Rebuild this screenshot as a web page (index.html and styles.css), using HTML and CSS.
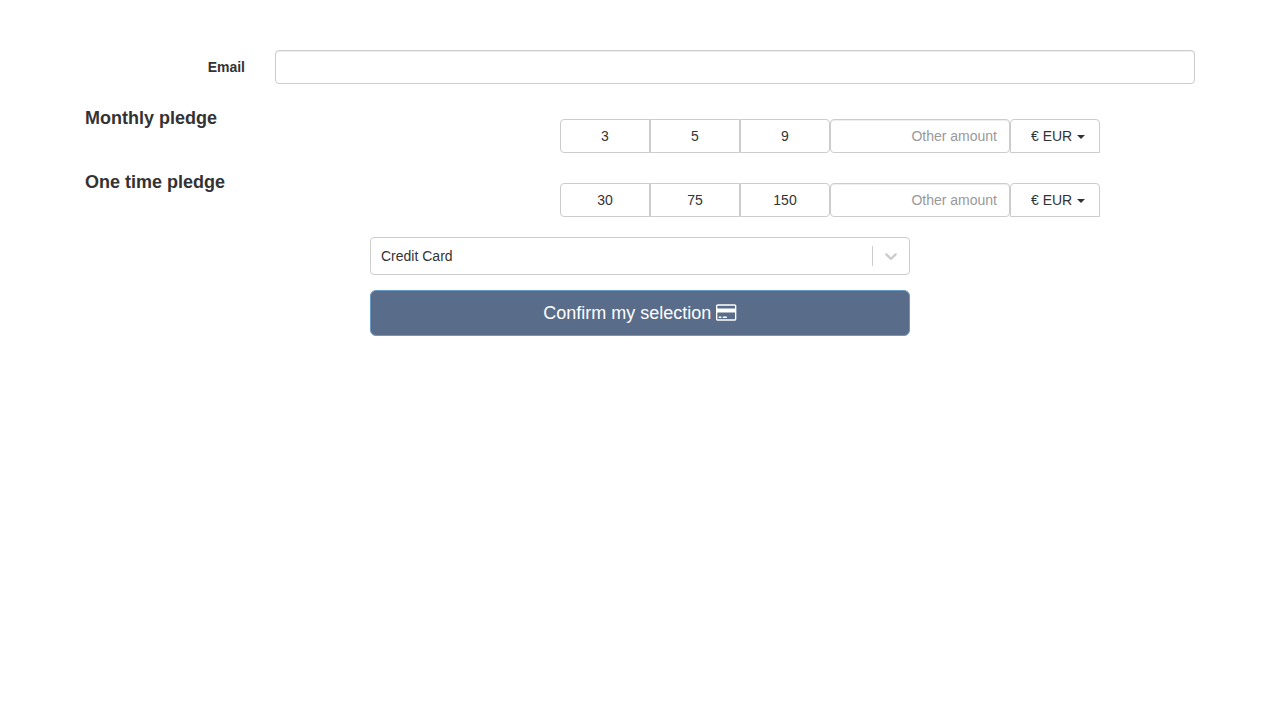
FILE: index.html
```html
<!DOCTYPE html>
<html lang="en">
<head>
    <meta charset="UTF-8" />
    <meta name="viewport" content="width=device-width, initial-scale=1.0"/>
    <title>Pledge</title>
    <link rel="stylesheet" href="styles.css">
</head>
<body>
<form class="container">
    <div class="email-row">
        <label for="email">Email</label>
        <input type="email" id="email" class="form-control">
    </div>

    <!-- Monthly amounts -->
    <div class="pledge">
        <h4>Monthly pledge</h4>
        <div class="amounts">
            <button type="button" class="amount">3</button>
            <button type="button" class="amount">5</button>
            <button type="button" class="amount">9</button>
            <input type="text" class="form-control other" placeholder="Other amount" aria-label="Other monthly amount">
            <div class="currency">
                <select aria-label="Monthly currency">
                    <option>€ EUR</option>
                    <option>$ USD</option>
                </select>
            </div>
        </div>
    </div>

    <!-- One time amounts -->
    <div class="pledge">
        <h4>One time pledge</h4>
        <div class="amounts">
            <button type="button" class="amount">30</button>
            <button type="button" class="amount">75</button>
            <button type="button" class="amount">150</button>
            <input type="text" class="form-control other" placeholder="Other amount" aria-label="Other one time amount">
            <div class="currency">
                <select aria-label="One time currency">
                    <option>€ EUR</option>
                    <option>$ USD</option>
                </select>
            </div>
        </div>
    </div>

    <div class="payment">
        <div class="method">
            <select aria-label="Payment method">
                <option>Credit Card</option>
            </select>
            <div class="indicator">
                <svg width="20" height="20" viewBox="0 0 20 20" aria-hidden="true">
                    <path d="M4.516 7.548c0.436-0.446 1.043-0.481 1.576 0l3.908 3.747 3.908-3.747c0.533-0.481 1.141-0.446 1.574 0 0.436 0.445 0.408 1.197 0 1.615-0.406 0.418-4.695 4.502-4.695 4.502-0.217 0.223-0.502 0.335-0.787 0.335s-0.57-0.112-0.789-0.335c0 0-4.287-4.084-4.695-4.502s-0.436-1.17 0-1.615z"/>
                </svg>
            </div>
        </div>
        <button type="submit" class="confirm">
            Confirm my selection
            <svg class="card-icon" viewBox="0 0 1920 1792" aria-hidden="true">
                <path d="M1760 128q66 0 113 47t47 113v1216q0 66-47 113t-113 47h-1600q-66 0-113-47t-47-113v-1216q0-66 47-113t113-47h1600zm-1600 128q-13 0-22.5 9.5t-9.5 22.5v224h1664v-224q0-13-9.5-22.5t-22.5-9.5h-1600zm1600 1280q13 0 22.5-9.5t9.5-22.5v-608h-1664v608q0 13 9.5 22.5t22.5 9.5h1600zm-1504-128v-128h256v128h-256zm384 0v-128h384v128h-384z"/>
            </svg>
        </button>
    </div>
</form>
</body>
</html>
```
FILE: styles.css
```css
* {
    box-sizing: border-box;
}
body {
    margin: 0;
    background: #fff;
    color: #333;
    font-family: "Liberation Sans", Arial, sans-serif;
    font-size: 14px;
    line-height: 20px;
}
button, input, select {
    margin: 0;
    font-family: inherit;
    font-size: 14px;
    line-height: 20px;
    color: #333;
}
.container {
    max-width: 1140px;
    margin: 0 auto;
    padding: 50px 15px;
}
.email-row {
    display: flex;
    align-items: center;
    gap: 30px;
    margin-bottom: 24px;
}
.email-row label {
    width: 160px;
    text-align: right;
    font-weight: bold;
}
.form-control {
    flex: 1;
    min-width: 0;
    height: 34px;
    padding: 6px 12px;
    background: #fff;
    border: 1px solid #ccc;
    border-radius: 4px;
    box-shadow: inset 0 1px 1px rgba(0, 0, 0, 0.075);
}
.form-control::placeholder {
    color: #999;
    opacity: 1;
}
.pledge {
    display: flex;
    justify-content: space-between;
    margin-bottom: 19px;
    padding-right: 95px;
}
.pledge h4 {
    margin: 0;
    font-size: 18px;
    line-height: 20px;
}
.amounts {
    display: flex;
    width: 540px;
    padding-top: 11px;
}
.amount {
    width: 90px;
    height: 34px;
    padding: 6px 12px;
    background: #fff;
    border: 1px solid #ccc;
    cursor: pointer;
}
.amount:first-child {
    border-radius: 4px 0 0 4px;
}
.amount:nth-child(3) {
    border-radius: 0 4px 4px 0;
}
.other {
    text-align: right;
}
.currency {
    position: relative;
    width: 90px;
}
.currency select {
    appearance: none;
    width: 100%;
    height: 34px;
    padding: 6px 20px;
    background: #fff;
    border: 1px solid #ccc;
    border-radius: 4px 4px 0 0;
    cursor: pointer;
}
.currency::after {
    content: "";
    position: absolute;
    top: 16px;
    right: 15px;
    border-top: 4px solid #333;
    border-right: 4px solid transparent;
    border-left: 4px solid transparent;
    pointer-events: none;
}
.payment {
    max-width: 540px;
    margin: 20px auto 0;
}
.method {
    position: relative;
    margin-bottom: 15px;
}
.method select {
    display: block;
    appearance: none;
    width: 100%;
    height: 38px;
    padding: 8px 10px;
    background: #fff;
    border: 1px solid #ccc;
    border-radius: 4px;
}
.indicator {
    position: absolute;
    top: 9px;
    right: 1px;
    display: flex;
    padding: 0 8px;
    border-left: 1px solid #ccc;
    pointer-events: none;
}
.indicator svg {
    fill: #ccc;
}
.confirm {
    display: block;
    width: 100%;
    height: 46px;
    padding: 10px 16px;
    background: #596c89;
    border: 1px solid #6998c2;
    border-radius: 6px;
    color: #fff;
    font-size: 18px;
    line-height: 24px;
    cursor: pointer;
}
.card-icon {
    height: 19px;
    vertical-align: -3px;
    fill: #fff;
}
```
